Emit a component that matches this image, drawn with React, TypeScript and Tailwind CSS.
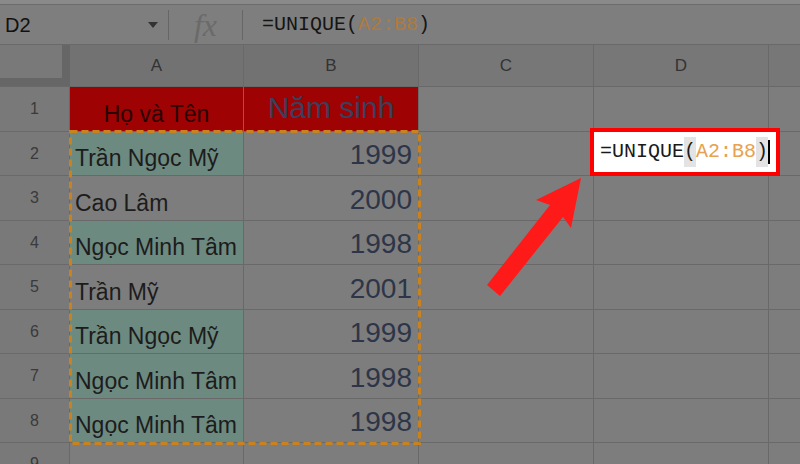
import React from 'react';

const rows = [
  { name: 'Trần Ngọc Mỹ', year: '1999', green: true },
  { name: 'Cao Lâm', year: '2000', green: false },
  { name: 'Ngọc Minh Tâm', year: '1998', green: true },
  { name: 'Trần Mỹ', year: '2001', green: false },
  { name: 'Trần Ngọc Mỹ', year: '1999', green: true },
  { name: 'Ngọc Minh Tâm', year: '1998', green: true },
  { name: 'Ngọc Minh Tâm', year: '1998', green: true },
];

const heights = ['h-[44px]', 'h-[45px]', 'h-[44px]', 'h-[45px]', 'h-[44px]', 'h-[45px]', 'h-[44px]'];

function RowHead({ n }: { n: number }) {
  return (
    <div className="w-[70px] shrink-0 flex items-center justify-center border-r border-[#696969] bg-[#797979] text-[16px] text-[#3a3a3a]">
      {n}
    </div>
  );
}

function Cell({ className = '', children }: { className?: string; children?: React.ReactNode }) {
  return <div className={`shrink-0 border-r border-[#696969] ${className}`}>{children}</div>;
}

export default function App() {
  return (
    <div className="relative w-[800px] h-[464px] overflow-hidden bg-[#7d7d7d]" style={{ fontFamily: '"Liberation Sans", Arial, sans-serif' }}>
      {/* top strip */}
      <div className="h-[5px] bg-[#8a8a8a] border-b border-[#6c6c6c]" />

      {/* formula bar */}
      <div className="h-[40px] flex items-center border-b border-[#696969] bg-[#7e7e7e]">
        <div className="w-[168px] flex items-center pl-[5px] pr-[10px]">
          <span className="text-[20px] text-[#111]">D2</span>
          <span className="ml-auto w-0 h-0 border-l-[5px] border-r-[5px] border-t-[6px] border-l-transparent border-r-transparent border-t-[#333]" />
        </div>
        <div className="w-px h-[30px] bg-[#666]" />
        <div className="w-[73px] flex justify-center">
          <span className="text-[32px] italic text-[#6a6a6a] leading-none" style={{ fontFamily: '"Liberation Serif", serif' }}>fx</span>
        </div>
        <div className="w-px h-[30px] bg-[#666]" />
        <div className="pl-[19px] text-[20px] text-[#151515]" style={{ fontFamily: '"Liberation Mono", monospace' }}>
          =UNIQUE(<span className="text-[#b07a3c]">A2:B8</span>)
        </div>
      </div>

      {/* column headers */}
      <div className="flex h-[42px] border-b border-[#696969] bg-[#777777] text-[17px] text-[#333]">
        <div className="w-[70px] shrink-0 flex">
          <div className="w-[62px] h-full bg-[#797979] border-b-[8px] border-[#666]" />
          <div className="w-[8px] h-full bg-[#666]" />
        </div>
        <Cell className="w-[174px] flex items-center justify-center bg-[#727272]">A</Cell>
        <Cell className="w-[175px] flex items-center justify-center bg-[#727272]">B</Cell>
        <Cell className="w-[175px] flex items-center justify-center">C</Cell>
        <Cell className="w-[175px] flex items-center justify-center">D</Cell>
        <div className="flex-1" />
      </div>

      {/* row 1 */}
      <div className="flex h-[45px] border-b border-[#696969]">
        <RowHead n={1} />
        <Cell className="w-[174px] bg-[#9e0202] flex items-end justify-center pb-[5px] text-[23px] leading-none text-[#2a0404]">Họ và Tên</Cell>
        <Cell className="w-[175px] bg-[#9e0202] flex items-start justify-center pt-[6px] text-[30px] leading-none text-[#3b3f5c]">Năm sinh</Cell>
        <Cell className="w-[175px]" />
        <Cell className="w-[175px]" />
        <div className="flex-1" />
      </div>

      {rows.map((r, i) => (
        <div key={i} className={`flex ${heights[i]} border-b border-[#696969]`}>
          <RowHead n={i + 2} />
          <Cell className={`w-[174px] flex items-end pl-[5px] pb-[5px] text-[23px] leading-none text-[#1c1c1c] ${r.green ? 'bg-[#6c8a80]' : ''}`}>{r.name}</Cell>
          <Cell className="w-[175px] flex items-end justify-end pr-[6px] pb-[6px] text-[28px] leading-none text-[#2d3548]">{r.year}</Cell>
          <Cell className="w-[175px]" />
          <Cell className="w-[175px]" />
          <div className="flex-1" />
        </div>
      ))}

      {/* row 9 */}
      <div className="flex h-[30px]">
        <div className="w-[70px] shrink-0 flex justify-center pt-[9px] border-r border-[#696969] bg-[#797979] text-[16px] text-[#3a3a3a]">9</div>
        <Cell className="w-[174px]" />
        <Cell className="w-[175px]" />
        <Cell className="w-[175px]" />
        <Cell className="w-[175px]" />
      </div>

      {/* copy/selection dashed border around A2:B8 */}
      <svg className="absolute left-[69px] top-[130px]" width="352" height="315">
        <rect x="1.5" y="1.5" width="349" height="312" fill="none" stroke="#c8821f" strokeWidth="3" strokeDasharray="7 4" />
      </svg>

      {/* formula in D2 */}
      <div className="absolute left-[590px] top-[128px] w-[190px] h-[48px] border-[4px] border-[#ff0000] bg-white flex items-center pl-[6px] text-[20px] text-[#1a1a1a]" style={{ fontFamily: '"Liberation Mono", monospace' }}>
        <span>=UNIQUE</span>
        <span className="bg-[#e3e3e3]">(</span>
        <span className="text-[#e8a14e]">A2:B8</span>
        <span className="bg-[#e3e3e3]">)</span>
        <span className="w-[2px] h-[24px] bg-black" />
      </div>

      {/* red arrow */}
      <svg className="absolute left-0 top-0 pointer-events-none" width="800" height="464">
        <polygon points="581,178 571,228 563,217 500,296 487,285 550,205 536,200" fill="#ff1a1a" />
      </svg>
    </div>
  );
}
